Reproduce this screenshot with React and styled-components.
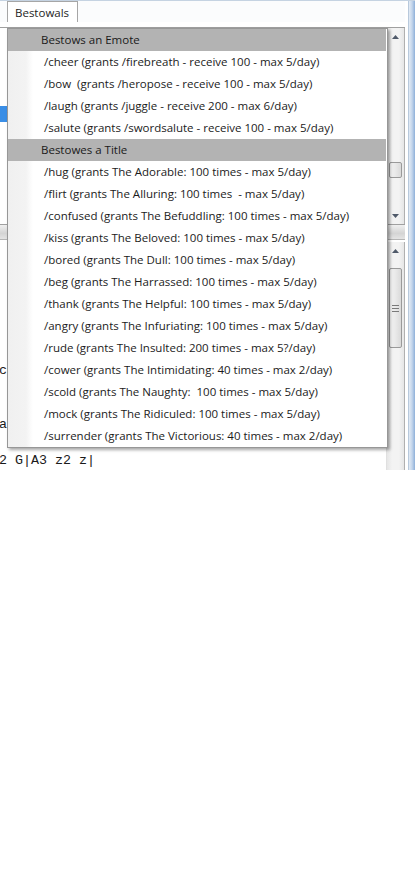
import React from 'react';
import styled, { createGlobalStyle } from 'styled-components';

const emotes = [
  '/cheer (grants /firebreath - receive 100 - max 5/day)',
  '/bow  (grants /heropose - receive 100 - max 5/day)',
  '/laugh (grants /juggle - receive 200 - max 6/day)',
  '/salute (grants /swordsalute - receive 100 - max 5/day)',
];

const titles = [
  '/hug (grants The Adorable: 100 times - max 5/day)',
  '/flirt (grants The Alluring: 100 times  - max 5/day)',
  '/confused (grants The Befuddling: 100 times - max 5/day)',
  '/kiss (grants The Beloved: 100 times - max 5/day)',
  '/bored (grants The Dull: 100 times - max 5/day)',
  '/beg (grants The Harrassed: 100 times - max 5/day)',
  '/thank (grants The Helpful: 100 times - max 5/day)',
  '/angry (grants The Infuriating: 100 times - max 5/day)',
  '/rude (grants The Insulted: 200 times - max 5?/day)',
  '/cower (grants The Intimidating: 40 times - max 2/day)',
  '/scold (grants The Naughty:  100 times - max 5/day)',
  '/mock (grants The Ridiculed: 100 times - max 5/day)',
  '/surrender (grants The Victorious: 40 times - max 2/day)',
];

// lines of the text pane behind the menu; only their first column shows
const textLines = ['', '', '', '', '', '', 'c', '', '', 'a', '', '2 G|A3 z2 z|'];

const GlobalStyle = createGlobalStyle`
  html, body {
    margin: 0;
    padding: 0;
    background: #ffffff;
  }
  body {
    font-family: "Open Sans", "Noto Sans", sans-serif;
  }
`;

const Window = styled.div`
  position: relative;
  width: 415px;
  height: 470px;
  display: flex;
  flex-direction: column;
  background: #ffffff;
  overflow: hidden;
`;

const FrameTop = styled.div`
  height: 6px;
  background: linear-gradient(to right, #dfe7f0 0%, #d6e2ef 35%, #b9cfe8 50%, #d9e4f0 65%, #cddcec 100%);
  border-bottom: 1px solid #c5d3e2;
`;

const Body = styled.div`
  flex: 1;
  display: flex;
`;

const Client = styled.div`
  flex: 1;
  display: flex;
  flex-direction: column;
  background: #ffffff;
  padding-right: 3px;
`;

const FrameRight = styled.div`
  width: 6px;
  background: linear-gradient(to right, #e3ebf4, #c4d6ec 50%, #8eb0d9);
  border-left: 1px solid #b8c9dc;
`;

const MenuBar = styled.div`
  height: 21px;
  display: flex;
  align-items: flex-end;
  padding-left: 7px;
  background: #fbfcfd;
`;

const Tab = styled.div`
  height: 20px;
  width: 62px;
  padding-left: 7px;
  border: 1px solid #a6a6a6;
  border-bottom: none;
  background: #ffffff;
  font-size: 11.5px;
  line-height: 21px;
  color: #1e1e1e;
`;

const ListBox = styled.div`
  margin-top: 5px;
  height: 196px;
  display: flex;
  border-top: 1px solid #a0a0a0;
  border-bottom: 1px solid #a0a0a0;
`;

const ListArea = styled.div`
  flex: 1;
  padding-top: 14px;
`;

const ListRow = styled.div`
  height: 16px;
  background: ${p => (p.selected ? '#3a8ee6' : 'transparent')};
`;

const Scrollbar = styled.div`
  width: 17px;
  display: flex;
  flex-direction: column;
  align-items: center;
  background: linear-gradient(to right, #e6e6e6, #f3f3f3 30%, #f3f3f3 70%, #e6e6e6);
  border-left: 1px solid #e0e0e0;
  border-right: 1px solid #b0b0b0;
`;

const Arrow = styled.div`
  height: 17px;
  width: 17px;
  display: flex;
  align-items: center;
  justify-content: center;
  flex-shrink: 0;
`;

const Track = styled.div`
  flex: 1;
  width: 100%;
  display: flex;
  flex-direction: column;
  align-items: center;
  padding-top: ${p => p.offset}px;
  box-sizing: border-box;
`;

const Thumb = styled.div`
  width: 13px;
  height: ${p => p.size}px;
  box-sizing: border-box;
  border: 1px solid #9a9a9a;
  border-radius: 2px;
  background: linear-gradient(to right, #f4f4f4, #e9e9e9 50%, #dadada);
  display: flex;
  align-items: center;
  justify-content: center;
`;

const Splitter = styled.div`
  height: 14px;
  background: linear-gradient(to bottom, #f0f0f0, #d4d4d4 60%, #e4e4e4);
  border-bottom: 1px solid #b5b5b5;
`;

const TextPane = styled.div`
  flex: 1;
  display: flex;
  margin-top: 2px;
`;

const TextArea = styled.div`
  flex: 1;
  padding-top: 12px;
  font-family: "Liberation Mono", "DejaVu Sans Mono", monospace;
  font-size: 13.33px;
  line-height: 18px;
  color: #1a1a1a;
`;

const TextLine = styled.div`
  height: 18px;
  width: max-content;
  margin-left: -1px;
  white-space: pre;
`;

const Menu = styled.div`
  position: absolute;
  left: 7px;
  top: 28px;
  width: 378px;
  padding: 0 1px 0 0;
  border: 1px solid #979797;
  background: linear-gradient(to right, #f0f0f0 0px, #f3f3f3 18px, #fafafa 22px, #ffffff 25px);
  box-shadow: 2px 2px 3px rgba(0, 0, 0, 0.35);
  font-size: 11.5px;
  color: #1b1b1b;
`;

const GroupHeader = styled.div`
  height: 22px;
  line-height: 21px;
  padding-left: 33px;
  background: #b3b3b3;
  color: #1a1a1a;
`;

const Item = styled.div`
  height: 22px;
  line-height: 21px;
  padding-left: 36px;
  white-space: pre;
`;

const UpArrow = () => (
  <svg width="7" height="4" viewBox="0 0 7 4">
    <path d="M0 4 L3.5 0 L7 4 Z" fill="#505a6a" />
  </svg>
);

const DownArrow = () => (
  <svg width="7" height="4" viewBox="0 0 7 4">
    <path d="M0 0 L3.5 4 L7 0 Z" fill="#505a6a" />
  </svg>
);

const Grip = () => (
  <svg width="7" height="7" viewBox="0 0 7 7">
    <path d="M0 0.5 H7 M0 3.5 H7 M0 6.5 H7" stroke="#7a7a7a" strokeWidth="1" />
  </svg>
);

export default function App() {
  return (
    <>
      <GlobalStyle />
      <Window>
        <FrameTop />
        <Body>
          <Client>
            <MenuBar>
              <Tab>Bestowals</Tab>
            </MenuBar>
            <ListBox>
              <ListArea>
                {[0, 1, 2, 3, 4, 5].map(i => (
                  <ListRow key={i} selected={i === 4} />
                ))}
              </ListArea>
              <Scrollbar>
                <Arrow><UpArrow /></Arrow>
                <Track offset={117}>
                  <Thumb size={16} />
                </Track>
                <Arrow><DownArrow /></Arrow>
              </Scrollbar>
            </ListBox>
            <Splitter />
            <TextPane>
              <TextArea>
                {textLines.map((l, i) => <TextLine key={i}>{l}</TextLine>)}
              </TextArea>
              <Scrollbar>
                <Arrow><UpArrow /></Arrow>
                <Track offset={9}>
                  <Thumb size={80}><Grip /></Thumb>
                </Track>
              </Scrollbar>
            </TextPane>
          </Client>
          <FrameRight />
        </Body>
        <Menu>
          <GroupHeader>Bestows an Emote</GroupHeader>
          {emotes.map(t => <Item key={t}>{t}</Item>)}
          <GroupHeader>Bestowes a Title</GroupHeader>
          {titles.map(t => <Item key={t}>{t}</Item>)}
        </Menu>
      </Window>
    </>
  );
}
